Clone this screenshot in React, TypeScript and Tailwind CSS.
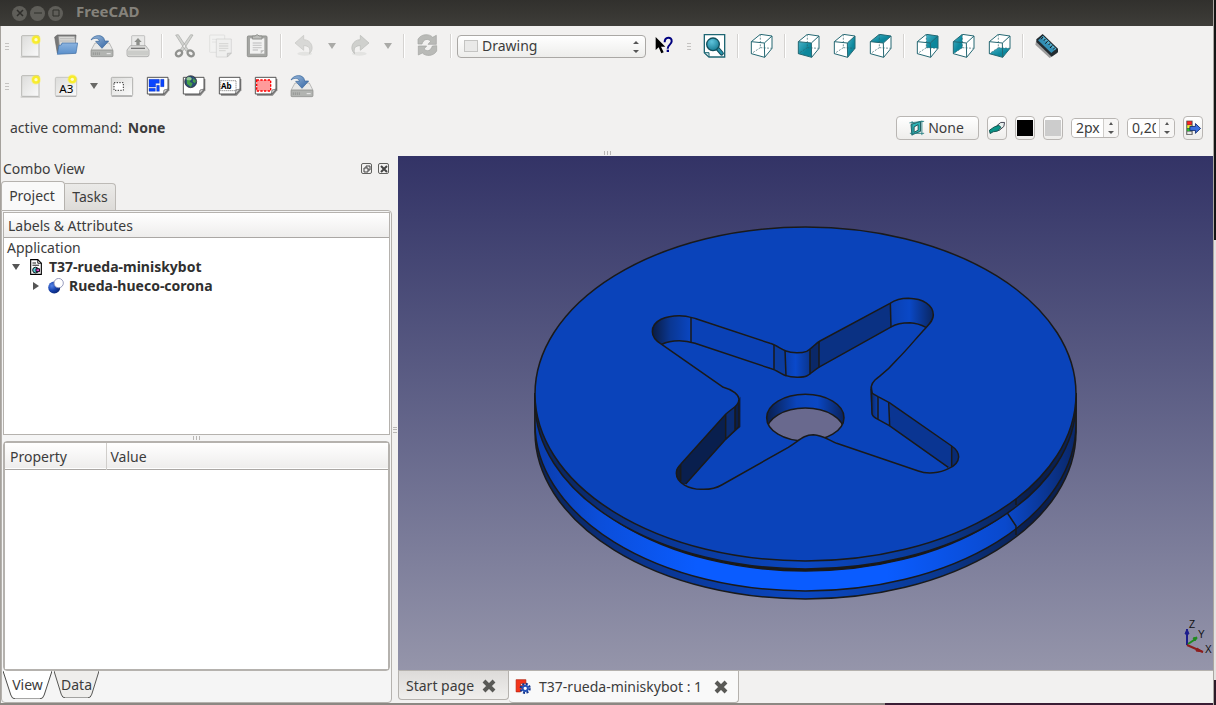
import * as React from 'react';

type IconProps = { children: React.ReactNode; className?: string };

// Toolbar artwork is drawn on a 72 unit grid and shown at 24px.
function Icon({ children, className = 'size-6' }: IconProps) {
  return (
    <svg viewBox="0 0 72 72" className={`${className} shrink-0`} fill="none" aria-hidden="true">
      {children}
    </svg>
  );
}

function Glow({ x, y }: { x: number; y: number }) {
  return (
    <g>
      <circle cx={x} cy={y} r="15" fill="#fff23a" opacity=".35" />
      <circle cx={x} cy={y} r="12" fill="#f8ec20" opacity=".9" />
      <circle cx={x} cy={y} r="5" fill="#fffdc8" />
    </g>
  );
}

function NewIcon() {
  return (
    <Icon>
      <path d="M8 69h58" stroke="#b9b9b6" strokeWidth="3" />
      <rect x="11" y="5" width="52" height="62" rx="2" fill="url(#paper)" stroke="#adadaa" strokeWidth="2.5" />
      <Glow x={54} y={17} />
    </Icon>
  );
}

function OpenIcon() {
  return (
    <Icon>
      <path d="M2 9 10 3h56l-4 54H10z" fill="#777" stroke="#666" strokeWidth="2" />
      <path d="M14 7h48l4 30H16z" fill="#d8d8d6" stroke="#999" strokeWidth="2" />
      <path d="M18 14h44M18 21h44" stroke="#aaa" strokeWidth="2" />
      <path d="M24 27h47l-5 31-56 3 5-27 7-1z" fill="url(#folder)" stroke="#3c6ea8" strokeWidth="2" />
    </Icon>
  );
}

function SaveIcon() {
  return (
    <Icon>
      <path d="M15 27h43l11 22H3z" fill="#e9e9e8" stroke="#a0a09e" strokeWidth="2" />
      <rect x="3" y="48" width="66" height="20" rx="3" fill="#b2b4b1" stroke="#888a86" strokeWidth="2" />
      <path d="M10 55v8M16 55v8M22 55v8M28 55v8" stroke="#888a86" strokeWidth="2" />
      <path d="M50 59h12" stroke="#eee" strokeWidth="3" />
      <path d="M3 18C10 2 42-2 44 21h12L36 43 17 22h11C27 12 14 10 3 18z" fill="url(#arrowBlue)" stroke="#346299" strokeWidth="2" />
    </Icon>
  );
}

function PrintIcon() {
  return (
    <Icon>
      <rect x="17" y="5" width="39" height="34" rx="2" fill="#e9e9e8" stroke="#aaa" strokeWidth="2" />
      <path d="m36 12 11 12h-6v10H31V24h-6z" fill="#8c8e8a" />
      <path d="M13 35h46l10 13v14q0 6-6 6H9q-6 0-6-6V48z" fill="#dededc" stroke="#999" strokeWidth="2" />
      <path d="M5 50h62v14H5z" fill="#cbccc9" />
      <path d="M15 43h42" stroke="#777" strokeWidth="4" />
    </Icon>
  );
}

function CutIcon() {
  return (
    <Icon>
      <path d="m8 3 8-1 30 46-7 4zM60 3l-7-1-32 46 8 4z" fill="#d2d3d0" stroke="#a6a7a4" strokeWidth="2" />
      <ellipse cx="18" cy="58" rx="10" ry="8" stroke="#91928f" strokeWidth="7" transform="rotate(-35 18 58)" />
      <ellipse cx="53" cy="58" rx="10" ry="8" stroke="#91928f" strokeWidth="7" transform="rotate(35 53 58)" />
    </Icon>
  );
}

function CopyIcon() {
  return (
    <Icon>
      <rect x="2" y="3" width="45" height="52" rx="2" fill="#f2f2f1" stroke="#dadad8" strokeWidth="2" />
      <path d="M9 16h22M9 24h18" stroke="#ddd" strokeWidth="2" />
      <path d="M22 15h45v42L55 69H22z" fill="#efefee" stroke="#cfcfcd" strokeWidth="2" />
      <path d="M30 29h28M30 36h28M30 43h28M30 50h20" stroke="#d9d9d7" strokeWidth="4" />
      <path d="m67 57-12 12V58z" fill="#d9d9d7" stroke="#bbb" strokeWidth="2" />
    </Icon>
  );
}

function PasteIcon() {
  return (
    <Icon>
      <rect x="7" y="6" width="59" height="62" rx="3" fill="#a5a6a3" stroke="#91928f" strokeWidth="3" />
      <path d="M15 13h43v46H15z" fill="#f1f1f0" />
      <path d="M23 27h27M23 34h27M23 41h27M23 48h16" stroke="#ccc" strokeWidth="4" />
      <path d="M22 6h8q6-8 13 0h8v9H22z" fill="#bdbebb" stroke="#8e908c" strokeWidth="3" />
      <path d="m58 48-11 11V49z" fill="#bbb" />
    </Icon>
  );
}

function UndoIcon({ flip = false }: { flip?: boolean }) {
  return (
    <Icon>
      <g transform={flip ? 'matrix(-1 0 0 1 72 0)' : undefined}>
        <ellipse cx="38" cy="59" rx="22" ry="6" fill="#e3e3e1" />
        <path d="M9 27 35 4v13c24 0 34 28 17 42 4-16-1-24-17-24v14z" fill={flip ? '#cfd0cd' : '#d8d8d6'} stroke={flip ? '#b8b9b6' : '#c5c6c3'} strokeWidth="2" />
      </g>
    </Icon>
  );
}

function RefreshIcon() {
  return (
    <Icon>
      <g fill="#b9bab7" stroke="#a2a3a0" strokeWidth="2">
        <path d="M9 30V16C18-1 43-2 53 10l11-6v27H39l8-9c-8-9-21-8-26 8z" />
        <path d="M65 35v16C56 67 32 68 22 57l-12 6V36h25l-8 9c8 8 20 7 25-9z" />
      </g>
    </Icon>
  );
}

function WhatsThisIcon() {
  return (
    <Icon>
      <path d="M11 9v39l9-8 8 18 7-3-8-17h13z" fill="#000" />
      <path d="M38 25c0-18 22-18 21-3 0 10-12 10-12 22" stroke="#00007f" strokeWidth="6" />
      <path d="M44 47h7v7h-7z" fill="#00007f" />
    </Icon>
  );
}

function FitAllIcon() {
  return (
    <Icon>
      <path d="M7 2h61v67H21L7 56z" fill="#fff" stroke="#1e6673" strokeWidth="4" />
      <path d="M7 56h14v13z" fill="#c9dfe2" stroke="#1e6673" strokeWidth="3" />
      <path d="m46 43 13 15" stroke="#134e5c" strokeWidth="13" strokeLinecap="round" />
      <path d="m46 43 13 15" stroke="#2992aa" strokeWidth="7" strokeLinecap="round" />
      <circle cx="33" cy="31" r="19" fill="url(#lens)" stroke="#12505e" strokeWidth="4" />
    </Icon>
  );
}

const FACES = {
  none: '',
  front: 'M7 23 46 27 47 70 7 59z',
  right: 'M46 27 69 6V43L47 70z',
  top: 'M7 23 34 1 69 6 46 27z',
  rear: 'M34 1 69 6V43L34 41z',
  left: 'M7 23 34 1V41L7 59z',
  bottom: 'M7 59 34 41 69 43 47 70z',
};

type Face = keyof typeof FACES;

function CubeIcon({ face }: { face: Face }) {
  return (
    <Icon>
      <path d="M7 23 34 1 69 6V43L47 70 7 59z" fill="#fff" />
      {FACES[face] && <path d={FACES[face]} fill="url(#teal)" />}
      <path d="M34 1v40L7 59M34 41l35 2" stroke="#2c5f68" strokeWidth="2" strokeDasharray="6 4" />
      <path d="M7 23 34 1 69 6V43L47 70 7 59zM7 23l39 4M46 27 69 6M46 27l1 43" stroke="#256873" strokeWidth="3" strokeLinejoin="round" />
    </Icon>
  );
}

function MeasureIcon() {
  return (
    <Icon>
      <path d="m6 22-2 10 43 40 22-14V48z" fill="#777" opacity=".7" />
      <path d="m26 0 46 44v11L53 68 7 24v-8z" fill="#222b30" />
      <path d="M27 6 67 44 52 57 12 19z" fill="#328fb5" />
      <path d="m27 6-5 4 40 38 5-4z" fill="#54abc9" />
      <path d="m27 9-6 7m13-1-4 5m11 1-7 8m14-1-4 5m11 1-7 8m14-1-4 5" stroke="#111" strokeWidth="3" />
    </Icon>
  );
}

function A3Icon() {
  return (
    <Icon>
      <rect x="4" y="10" width="64" height="56" rx="4" fill="url(#paper)" stroke="#b5b5b2" strokeWidth="2" />
      <path d="M5 67h62" stroke="#aaa" strokeWidth="3" />
      <Glow x={55} y={16} />
      <text x="37" y="56" textAnchor="middle" fontSize="35" fill="#000" className="font-['Noto_Sans',sans-serif]">A3</text>
    </Icon>
  );
}

function ViewFrameIcon() {
  return (
    <Icon>
      <rect x="4" y="10" width="64" height="55" rx="3" fill="url(#paper)" stroke="#b0b0ae" strokeWidth="3" />
      <path d="M5 67h62" stroke="#aaa" strokeWidth="3" />
      <rect x="12" y="26" width="28" height="23" fill="#fff" stroke="#333" strokeWidth="3" strokeDasharray="4 4" />
    </Icon>
  );
}

function Sheet({ children }: { children: React.ReactNode }) {
  return (
    <Icon>
      <path d="M9 15h61v34L56 65H9z" fill="#555" opacity=".7" />
      <path d="M4 10h62v36L52 60H4z" fill="#fff" stroke="#555" strokeWidth="3" />
      {children}
      <path d="m67 45-15 16 2-13z" fill="#ddd" stroke="#555" strokeWidth="2" />
    </Icon>
  );
}

function OrthoIcon() {
  return (
    <Sheet>
      <path d="M9 16h31v12H29v11H9zM44 16h10v22H44zM9 43h19v9H9zM32 34h8v18h-8z" fill="#0a45ff" stroke="#0a2a9a" strokeWidth="1" />
    </Sheet>
  );
}

function BrowserIcon() {
  return (
    <Sheet>
      <circle cx="26" cy="23" r="18" fill="#2a4d77" stroke="#222" strokeWidth="2" />
      <path d="M14 13q9-8 16 1l-7 9 9 5-5 11-12-9zM34 13l8 7-3 8-7-5z" fill="#47a04a" />
      <ellipse cx="21" cy="14" rx="8" ry="5" fill="#cbe2cd" opacity=".6" />
    </Sheet>
  );
}

function AnnotationIcon() {
  return (
    <Sheet>
      <rect x="8" y="20" width="46" height="30" stroke="#222" strokeWidth="2" strokeDasharray="3 3" />
      <text x="25" y="44" textAnchor="middle" fontSize="24" fontWeight="700" fill="#000" className="font-['Noto_Sans',sans-serif]">Ab</text>
    </Sheet>
  );
}

function ClipIcon() {
  return (
    <Sheet>
      <rect x="8" y="18" width="42" height="33" fill="#ff9b9b" stroke="#f00" strokeWidth="4" strokeDasharray="7 4" />
    </Sheet>
  );
}

function PlaneIcon() {
  return (
    <Icon className="size-4">
      <path d="M9 20 52 6v45L13 67zM23 31v24l18-9V21z" fill="#2fb6b8" fillRule="evenodd" stroke="#144b4e" strokeWidth="4" />
      <path d="M2 13 68 6M4 60h64M14 5v65M58 2v66" stroke="#257e83" strokeWidth="4" />
    </Icon>
  );
}

function ConstructionIcon() {
  return (
    <Icon className="size-4">
      <path d="m36 25 17-14h17l-3 18-21 18-15-3z" fill="#e8f0ee" stroke="#334" strokeWidth="4" />
      <path d="m2 46 22-15 20-7 10 9-15 17-20 3-14 8z" fill="#0b9488" stroke="#084b46" strokeWidth="4" />
    </Icon>
  );
}

function ApplyIcon() {
  return (
    <Icon className="size-4">
      <path d="M6 3h28v64H6z" fill="#444" />
      <path d="M10 6h20v15H10z" fill="#f22" />
      <path d="M10 23h20v13H10z" fill="#f9ee32" />
      <path d="M10 38h20v12H10z" fill="#2bc52b" />
      <path d="M10 52h20v12H10z" fill="#e8e8e8" />
      <path d="M22 29h25V16l23 22-23 22V47H22z" fill="#3d70df" stroke="#122c70" strokeWidth="4" />
    </Icon>
  );
}

function DocumentIcon() {
  return (
    <Icon className="size-4">
      <path d="M12 3h32l16 16v50H12z" fill="#fff" stroke="#000" strokeWidth="5" />
      <path d="M44 3v16h16M20 18h16M20 28h30" stroke="#000" strokeWidth="4" />
      <circle cx="34" cy="50" r="13" fill="#5ac9d6" stroke="#000" strokeWidth="4" />
      <path d="M36 44h16v13H36z" fill="#e04ad0" stroke="#000" strokeWidth="4" />
    </Icon>
  );
}

function BooleanIcon() {
  return (
    <Icon className="size-4">
      <circle cx="28" cy="43" r="27" fill="url(#ball)" />
      <circle cx="48" cy="23" r="21" fill="#fff" stroke="#8a8fb5" strokeWidth="4" />
    </Icon>
  );
}

function FreeCadIcon() {
  return (
    <Icon className="size-4">
      <path d="M5 3h44v17H25v9h19v15H25v14H5z" fill="#f4351b" stroke="#b21d0a" strokeWidth="3" />
      <circle cx="46" cy="42" r="20" stroke="#12348c" strokeWidth="10" strokeDasharray="9 6.7" />
      <circle cx="46" cy="42" r="12" fill="#fff" stroke="#2552b8" strokeWidth="9" />
    </Icon>
  );
}

function Cross() {
  return (
    <svg viewBox="0 0 14 14" className="size-3.5" aria-hidden="true">
      <path d="m2 2 10 10m0-10L2 12" stroke="#595956" strokeWidth="4" />
    </svg>
  );
}

function Caret() {
  return (
    <svg viewBox="0 0 8 6" className="h-1.5 w-2" aria-hidden="true">
      <path d="M0 0h8L4 6z" fill="currentColor" />
    </svg>
  );
}

function SharedPaints() {
  return (
    <svg className="absolute size-0" aria-hidden="true">
      <defs>
        <linearGradient id="paper" x1="0" y1="0" x2="1" y2="1">
          <stop stopColor="#dcdcda" />
          <stop offset="1" stopColor="#fafafa" />
        </linearGradient>
        <linearGradient id="folder" x1="0" y1="0" x2="0" y2="1">
          <stop stopColor="#8cb4e0" />
          <stop offset="1" stopColor="#5a8fca" />
        </linearGradient>
        <linearGradient id="arrowBlue" x1="0" y1="0" x2="1" y2="1">
          <stop stopColor="#9cbbdc" />
          <stop offset="1" stopColor="#3465a4" />
        </linearGradient>
        <radialGradient id="lens" cx=".4" cy=".3" r=".8">
          <stop stopColor="#5fc4dc" />
          <stop offset="1" stopColor="#10748c" />
        </radialGradient>
        <linearGradient id="teal" x1="0" y1="0" x2="1" y2="1">
          <stop stopColor="#48b1c6" />
          <stop offset=".6" stopColor="#0c879c" />
          <stop offset="1" stopColor="#0c879c" />
        </linearGradient>
        <radialGradient id="ball" cx=".3" cy=".35" r=".8">
          <stop stopColor="#5684e8" />
          <stop offset=".5" stopColor="#1742ad" />
          <stop offset="1" stopColor="#071e66" />
        </radialGradient>
      </defs>
    </svg>
  );
}

function ToolButton({ label, children, disabled }: { label: string; children: React.ReactNode; disabled?: boolean }) {
  return (
    <button type="button" aria-label={label} disabled={disabled} className="flex h-9 w-9 shrink-0 items-center justify-center">
      {children}
    </button>
  );
}

function MenuArrow({ label, muted }: { label: string; muted?: boolean }) {
  return (
    <button type="button" aria-label={label} className={`flex h-9 w-5 shrink-0 items-center justify-center ${muted ? 'text-[#aaaaa7]' : 'text-[#696966]'}`}>
      <Caret />
    </button>
  );
}

function Separator() {
  return (
    <div className="flex w-[11px] shrink-0 justify-center">
      <div className="h-6 w-0.5 border-r border-white bg-[#d5d3d1]" />
    </div>
  );
}

function Grip({ className = 'w-[11px]' }: { className?: string }) {
  return (
    <div className={`flex shrink-0 flex-col items-center gap-0.5 ${className}`}>
      <div className="h-px w-1 bg-[#c5c3c1]" />
      <div className="h-px w-1 bg-[#c5c3c1]" />
      <div className="h-px w-1 bg-[#c5c3c1]" />
    </div>
  );
}

function FlatGrip() {
  return (
    <div className="flex gap-0.5">
      <div className="h-1 w-px bg-[#b9b7b5]" />
      <div className="h-1 w-px bg-[#b9b7b5]" />
      <div className="h-1 w-px bg-[#b9b7b5]" />
    </div>
  );
}

function TitleBar() {
  const dot = 'flex size-[15px] items-center justify-center rounded-full bg-[#5f5e59]';
  return (
    <header className="flex h-[26px] shrink-0 items-center bg-linear-to-b from-[#31302d] to-[#3e3d39] pl-3">
      <div className="flex gap-[3px]">
        <button type="button" aria-label="Close" className={dot}>
          <svg viewBox="0 0 8 8" className="size-2"><path d="m1 1 6 6m0-6L1 7" stroke="#2f2e2b" strokeWidth="1.5" /></svg>
        </button>
        <button type="button" aria-label="Minimize" className={dot}>
          <svg viewBox="0 0 8 8" className="size-2"><path d="M0 4h8" stroke="#2f2e2b" strokeWidth="1" /></svg>
        </button>
        <button type="button" aria-label="Maximize" className={dot}>
          <svg viewBox="0 0 8 8" className="size-2"><path d="M1 1h6v6H1z" fill="none" stroke="#2f2e2b" strokeWidth="1" /></svg>
        </button>
      </div>
      <h1 className="pb-0.5 pl-[13px] text-[15px] font-bold text-[#85827b]">FreeCAD</h1>
    </header>
  );
}

function MainToolbar() {
  return (
    <div role="toolbar" aria-label="Standard" className="flex h-10 shrink-0 items-center">
      <Grip />
      <ToolButton label="New"><NewIcon /></ToolButton>
      <ToolButton label="Open"><OpenIcon /></ToolButton>
      <ToolButton label="Save"><SaveIcon /></ToolButton>
      <ToolButton label="Print"><PrintIcon /></ToolButton>
      <Separator />
      <ToolButton label="Cut" disabled><CutIcon /></ToolButton>
      <ToolButton label="Copy" disabled><CopyIcon /></ToolButton>
      <ToolButton label="Paste" disabled><PasteIcon /></ToolButton>
      <Separator />
      <ToolButton label="Undo" disabled><UndoIcon /></ToolButton>
      <MenuArrow label="Undo history" muted />
      <ToolButton label="Redo" disabled><UndoIcon flip /></ToolButton>
      <MenuArrow label="Redo history" muted />
      <Separator />
      <ToolButton label="Refresh" disabled><RefreshIcon /></ToolButton>
      <Separator />
      <div className="ml-px flex h-[23px] w-[189px] shrink-0 items-center rounded border border-[#aaa8a5] bg-linear-to-b from-white to-[#ededeb] px-1.5">
        <div className="h-3 w-3.5 border border-[#c4c4c2] bg-[#e9e9e8]" />
        <select aria-label="Workbench" defaultValue="Drawing" className="h-full min-w-0 flex-1 appearance-none pl-1 leading-5 outline-none">
          <option>Drawing</option>
        </select>
        <svg viewBox="0 0 6 14" className="h-3.5 w-1.5" aria-hidden="true">
          <path d="M0 5h6L3 2zM0 11h6l-3 3z" fill="#555" />
        </svg>
      </div>
      <ToolButton label="What's This?"><WhatsThisIcon /></ToolButton>
      <Grip className="w-3.5" />
      <ToolButton label="Fit all"><FitAllIcon /></ToolButton>
      <Separator />
      <ToolButton label="Axonometric"><CubeIcon face="none" /></ToolButton>
      <Separator />
      <ToolButton label="Front"><CubeIcon face="front" /></ToolButton>
      <ToolButton label="Right"><CubeIcon face="right" /></ToolButton>
      <ToolButton label="Top"><CubeIcon face="top" /></ToolButton>
      <Separator />
      <ToolButton label="Rear"><CubeIcon face="rear" /></ToolButton>
      <ToolButton label="Left"><CubeIcon face="left" /></ToolButton>
      <ToolButton label="Bottom"><CubeIcon face="bottom" /></ToolButton>
      <Separator />
      <ToolButton label="Measure distance"><MeasureIcon /></ToolButton>
    </div>
  );
}

function DrawingToolbar() {
  return (
    <div role="toolbar" aria-label="Drawing" className="flex h-10 shrink-0 items-center">
      <Grip />
      <ToolButton label="New drawing"><NewIcon /></ToolButton>
      <ToolButton label="Insert A3 page"><A3Icon /></ToolButton>
      <MenuArrow label="Page sizes" />
      <ToolButton label="Insert view"><ViewFrameIcon /></ToolButton>
      <ToolButton label="Insert orthographic views"><OrthoIcon /></ToolButton>
      <ToolButton label="Open browser view"><BrowserIcon /></ToolButton>
      <ToolButton label="Annotation"><AnnotationIcon /></ToolButton>
      <ToolButton label="Clip group"><ClipIcon /></ToolButton>
      <ToolButton label="Export page"><SaveIcon /></ToolButton>
    </div>
  );
}

const raised = 'flex h-6 items-center justify-center rounded border border-[#b9b6b3] bg-linear-to-b from-white to-[#eeedeb]';

function Spin({ label, value }: { label: string; value: string }) {
  return (
    <div className="flex h-5 w-12 rounded border border-[#b9b6b3] bg-white">
      <input aria-label={label} defaultValue={value} className="w-[31px] min-w-0 rounded-l bg-white pr-[3px] pl-1 outline-none" />
      <div className="flex flex-1 flex-col items-center justify-between rounded-r border-l border-[#cfcdca] bg-[#f7f6f5] py-[3px] text-[#555]">
        <button type="button" aria-label={`${label} up`}>
          <svg viewBox="0 0 6 3" className="block h-[3px] w-1.5"><path d="M1 3h4L3 0z" fill="currentColor" /></svg>
        </button>
        <button type="button" aria-label={`${label} down`}>
          <svg viewBox="0 0 6 3" className="block h-[3px] w-1.5"><path d="M0 0h6L3 3z" fill="currentColor" /></svg>
        </button>
      </div>
    </div>
  );
}

function CommandBar() {
  return (
    <div className="flex h-11 shrink-0 items-center justify-between pr-2.5 pl-[9px]">
      <p>
        active command: <b className="pl-0.5">None</b>
      </p>
      <div className="flex items-center gap-2">
        <button type="button" className={`${raised} w-[83px] gap-[3px] pr-0.5`}>
          <PlaneIcon /> None
        </button>
        <button type="button" aria-label="Construction mode" className={`${raised} w-5`}><ConstructionIcon /></button>
        <button type="button" aria-label="Line color" className={`${raised} w-5`}><span className="size-4 shrink-0 bg-black" /></button>
        <button type="button" aria-label="Face color" className={`${raised} w-5`}><span className="size-4 shrink-0 bg-[#cccccc]" /></button>
        <Spin label="Line width" value="2px" />
        <Spin label="Text size" value="0,20" />
        <button type="button" aria-label="Apply to selected" className={`${raised} w-5`}><ApplyIcon /></button>
      </div>
    </div>
  );
}

function SheetTab({ label, active }: { label: string; active?: boolean }) {
  return (
    <button type="button" role="tab" aria-selected={!!active} className={`relative ${active ? 'h-7 w-[49px]' : 'h-[27px] w-[45px]'}`}>
      <svg viewBox="0 0 50 28" preserveAspectRatio="none" className="absolute inset-0 size-full" aria-hidden="true">
        <path d="M0 0 8 24q1 4 5 4h24q4 0 5-4l8-24" fill={active ? '#fff' : '#efeeec'} stroke="#4a4a48" />
      </svg>
      <span className="relative">{label}</span>
    </button>
  );
}

function ComboView() {
  const dockButton = 'flex size-[11px] items-center justify-center rounded-xs border border-[#62625f]';
  return (
    <aside className="flex w-[391px] shrink-0 flex-col">
      <div className="flex h-[25px] shrink-0 items-center justify-between pr-[3px] pl-0.5">
        <h2>Combo View</h2>
        <div className="flex gap-1.5">
          <button type="button" aria-label="Float" className={dockButton}>
            <svg viewBox="0 0 8 8" className="size-2"><path d="M3 3V1h4v4H5M1 3h4v4H1z" fill="none" stroke="#444" /></svg>
          </button>
          <button type="button" aria-label="Close panel" className={dockButton}>
            <svg viewBox="0 0 8 8" className="size-2"><path d="m1 1 6 6m0-6L1 7" stroke="#444" strokeWidth="2" /></svg>
          </button>
        </div>
      </div>
      <div role="tablist" className="flex h-[29px] shrink-0 items-end">
        <button type="button" role="tab" aria-selected="true" className="h-[29px] w-16 rounded-t border border-b-0 border-[#b5b2ae] bg-[#f9f9f9] pr-0.5">Project</button>
        <button type="button" role="tab" aria-selected="false" className="h-[27px] w-[51px] rounded-tr border border-b-0 border-l-0 border-[#bdbab6] bg-linear-to-b from-[#ebeae8] to-[#dddbd8]">Tasks</button>
      </div>
      <div className="flex min-h-0 flex-1 flex-col rounded-tr rounded-b border border-[#b5b2ae] bg-[#f5f5f5] p-px">
        <section className="flex min-h-0 flex-[223] flex-col border border-[#b5b2ae] bg-white">
          <h3 className="h-[25px] shrink-0 border-b border-[#aaa7a4] bg-linear-to-b from-white to-[#eeedec] pt-px pl-1 leading-6">Labels &amp; Attributes</h3>
          <ul className="leading-[19px]">
            <li className="pl-[3px]">Application</li>
            <li className="flex items-center pl-2 font-bold text-[#303030]">
              <span className="text-[#555]"><Caret /></span>
              <span className="flex items-center gap-[5px] pl-2"><DocumentIcon />T37-rueda-miniskybot</span>
            </li>
            <li className="flex items-center pl-7 font-bold text-[#303030]">
              <span className="-rotate-90 text-[#555]"><Caret /></span>
              <span className="flex items-center gap-[5px] pl-2"><BooleanIcon />Rueda-hueco-corona</span>
            </li>
          </ul>
        </section>
        <div className="flex h-1.5 shrink-0 items-center justify-center"><FlatGrip /></div>
        <section className="flex min-h-0 flex-[230] flex-col rounded border border-[#b5b2ae]">
          <div className="flex-1 border border-[#b5b2ae] bg-white">
            <table className="w-full table-fixed border-collapse text-left">
              <thead>
                <tr className="h-[26px] border-b border-[#aaa7a4] bg-linear-to-b from-white to-[#eeedec]">
                  <th className="w-[101px] border-r border-[#d0cecb] p-0 pt-0.5 pl-[5px] font-normal">Property</th>
                  <th className="p-0 pt-0.5 pl-1 font-normal">Value</th>
                </tr>
              </thead>
            </table>
          </div>
        </section>
        <div role="tablist" className="flex h-[30px] shrink-0 items-start gap-0.5">
          <SheetTab label="View" active />
          <SheetTab label="Data" />
        </div>
      </div>
    </aside>
  );
}

const POCKET =
  'M37 155C37 120 80 107 118 107c20 0 35 5 50 9l222 74c15 4 35 18 48 23 17 7 47 7 62 1 15-8 27-24 40-31L750 70c15-10 35-15 55-15 45 1 75 20 75 50 0 15-10 25-22 38-28 29-48 57-88 97-30 35-45 43-65 60-14 14-12 22-8 40l17 10 34 18 187 130c15 10 21 20 21 33-1 17-11 27-31 35-25 14-65 17-90 7l-245-83c-25-10-40-25-70-26-30 1-40 16-75 38L245 615c-25 15-45 13-61 13-35 0-75-18-75-48 0-15 6-20 13-27l135-150c18-18 40-25 40-46-1-12-17-27-47-35L65 193C48 183 37 170 37 155z';

// The pocket cut in the top face, in its own 3x coordinate space.
function Pocket() {
  return (
    <g transform="translate(640 280) scale(.33333)" fill="none" stroke="#1a1a1a" strokeWidth="4.5" strokeLinejoin="round">
      <clipPath id="pocketClip"><path d={POCKET} /></clipPath>
      <clipPath id="holeClip"><ellipse cx="496" cy="413" rx="116" ry="70" /></clipPath>
      <g clipPath="url(#pocketClip)">
        <g stroke="none">
          <path d="M30 100h123v87C120 178 90 182 65 196L30 180z" fill="url(#wallLeft)" />
          <path d="M153 105 402 190v78L153 187z" fill="#0a41b6" />
          <path d="M402 190l36 20v77l-36-19z" fill="#0b3c9f" />
          <path d="M438 205h72v78c-12 10-55 12-72 4z" fill="url(#wallMid)" />
          <path d="M510 200l27-20v82l-27 20z" fill="#0a2868" />
          <path d="M537 180 752 60v82L537 262z" fill="#0a3183" />
          <path d="M752 50h140v80l-34 14c-30-20-70-20-106-2z" fill="url(#wallRight)" />
          <path d="M100 540 257 395v82L137 612l-40 10z" fill="#091f4e" />
          <path d="M257 395l45-45v90l-45 38z" fill="#0a2b70" />
          <path d="M285 370h14v72l-14 8z" fill="#0a1e49" />
          <path d="M690 325l24 20v73q-20-5-20-20z" fill="url(#wallTurn)" />
          <path d="M714 345l34 20v72l-34-19z" fill="#0a41b6" />
          <path d="M748 360 935 490v73h-10L748 437z" fill="#0a3592" />
          <path d="M935 490h25v60l-25 15z" fill="#082a73" />
          <path d="M105 560h18v45h-18z" fill="#111c33" />
        </g>
        <g clipPath="url(#holeClip)">
          <path d="M370 330h250v170H370z" fill="url(#bore)" stroke="none" />
          <ellipse cx="496" cy="454" rx="116" ry="70" fill="#69698e" />
        </g>
        <ellipse cx="496" cy="413" rx="116" ry="70" />
        <path d="M65 193c15-8 35-11 53-11 22 0 32 3 47 8l225 75c20 5 35 18 48 22 17 6 52 6 62 1 12-6 25-20 40-28l215-120c15-10 35-12 55-12 20 1 35 7 48 14" />
        <path d="M153 112v75M402 190v78M435 210l3 77M510 208v75M537 184v78M751 68l2 74" />
        <path d="M137 612 257 478l40-38V357M257 403v75M285 380v70M122 553v50" />
        <path d="M694 320l2 80q0 10 18 18l34 19 177 125M714 347v71M746 365l3 72M935 495v65" />
      </g>
      <path d={POCKET} />
    </g>
  );
}

function AxisCross() {
  return (
    <g strokeWidth="2" fill="none">
      <path d="M1187 645v-16" stroke="#1d1d8c" />
      <path d="m1188 644 9-6" stroke="#1f8a1f" />
      <path d="m1187 645 16 7" stroke="#8c1d1d" />
      <path d="m1185 634 2-5 2 5z" fill="#1d1d8c" stroke="#1d1d8c" strokeWidth="1" />
      <path d="m1193 638 4-1-2 4z" fill="#1f8a1f" stroke="#1f8a1f" strokeWidth="1" />
      <path d="m1197 648 6 4-7-1z" fill="#8c1d1d" stroke="#8c1d1d" strokeWidth="1" />
      <g fill="#111" fontSize="10" className="font-['Liberation_Sans',sans-serif]">
        <text x="1189" y="628">Z</text>
        <text x="1198" y="638">Y</text>
        <text x="1205" y="653">X</text>
      </g>
    </g>
  );
}

function Viewport() {
  return (
    <div className="min-h-0 flex-1 bg-linear-to-b from-[#333366] to-[#9595aa]">
      <svg viewBox="398 156 815 514" className="size-full" role="img" aria-label="Wheel model">
        <defs>
          <linearGradient id="rim">
            <stop stopColor="#0a2357" />
            <stop offset=".2" stopColor="#0a348d" />
            <stop offset=".5" stopColor="#0a47c2" />
            <stop offset=".75" stopColor="#0a388f" />
            <stop offset=".92" stopColor="#0a1e4d" />
            <stop offset="1" stopColor="#0a2256" />
          </linearGradient>
          <linearGradient id="groove">
            <stop stopColor="#0a3cab" />
            <stop offset=".12" stopColor="#0b4eda" />
            <stop offset=".3" stopColor="#0a5cff" />
            <stop offset=".65" stopColor="#0a5cff" />
            <stop offset=".87" stopColor="#0a49cc" />
            <stop offset="1" stopColor="#0a2768" />
          </linearGradient>
          <linearGradient id="wallLeft"><stop stopColor="#0a1838" /><stop offset=".5" stopColor="#0a3793" /><stop offset="1" stopColor="#0a46c2" /></linearGradient>
          <linearGradient id="wallMid"><stop stopColor="#0a3fae" /><stop offset=".4" stopColor="#0a49cb" /><stop offset="1" stopColor="#0a358d" /></linearGradient>
          <linearGradient id="wallRight"><stop stopColor="#0a40b1" /><stop offset=".4" stopColor="#0a48c6" /><stop offset="1" stopColor="#0a2050" /></linearGradient>
          <linearGradient id="wallTurn"><stop stopColor="#0a2560" /><stop offset="1" stopColor="#0a40b0" /></linearGradient>
          <linearGradient id="bore"><stop stopColor="#0a1a40" /><stop offset=".4" stopColor="#0a44bb" /><stop offset=".65" stopColor="#0a47c4" /><stop offset="1" stopColor="#0a1f50" /></linearGradient>
        </defs>
        <g stroke="#1a1a1a" strokeWidth="1.5">
          <path d="M535 394v38a270.5 167 0 0 0 541 0v-38z" fill="url(#rim)" />
          <path d="M535 394v30a270.5 167 0 0 0 541 0v-30z" fill="url(#groove)" />
          <ellipse cx="805.5" cy="409" rx="262" ry="162" fill="#1a1a1a" />
          <path d="M1006 511l10 15v9" fill="none" />
          <path d="M535 394v8a270.5 167 0 0 0 541 0v-8z" fill="url(#rim)" />
          <path d="M1016 497v8" />
          <ellipse cx="805.5" cy="394" rx="270.5" ry="167" fill="#0a43ba" />
        </g>
        <Pocket />
        <AxisCross />
      </svg>
    </div>
  );
}

function DocumentTabs() {
  return (
    <div className="flex h-[33px] shrink-0 items-start border-t border-[#b5b2ae]">
      <div className="flex h-[29px] items-center gap-2 rounded-b border border-t-0 border-[#b5b2ae] bg-linear-to-b from-[#dddbd9] to-[#f0efed] pt-0.5 pr-3 pl-[7px]">
        <button type="button">Start page</button>
        <button type="button" aria-label="Close Start page"><Cross /></button>
      </div>
      <div className="flex h-8 items-center gap-3 rounded-b border border-t-0 border-l-0 border-[#b5b2ae] bg-[#f9f9f9] pr-2.5 pl-1.5">
        <button type="button" className="flex items-center gap-2"><FreeCadIcon />T37-rueda-miniskybot : 1</button>
        <button type="button" aria-label="Close T37-rueda-miniskybot"><Cross /></button>
      </div>
    </div>
  );
}

export default function App() {
  return (
    <div className="flex h-screen overflow-hidden bg-[#f2f1f0] font-['Noto_Sans',sans-serif] text-sm text-[#3c3c3c]">
      <SharedPaints />
      <div className="flex min-w-0 flex-1 flex-col">
        <TitleBar />
        <div className="flex min-h-0 flex-1 flex-col border-l border-[#a5a19c]">
          <MainToolbar />
          <DrawingToolbar />
          <CommandBar />
          <div className="flex h-1.5 shrink-0 items-center justify-center"><FlatGrip /></div>
          <main className="flex min-h-0 flex-1">
            <ComboView />
            <div className="flex w-1.5 shrink-0 flex-col justify-center"><div className="-rotate-90"><FlatGrip /></div></div>
            <div className="flex min-w-0 flex-1 flex-col">
              <Viewport />
              <DocumentTabs />
            </div>
          </main>
        </div>
        <div className="flex h-0.5 shrink-0">
          <div className="flex-[73] bg-[#8c8883]" />
          <div className="flex-[27] bg-[#3a1e35]" />
        </div>
      </div>
      <div className="flex w-[3px] shrink-0 flex-col border-l border-[#aaa6a1]">
        <div className="flex-[240] bg-[#151515]" />
        <div className="flex-[440] bg-[#e4e2e0]" />
        <div className="flex-[25] bg-[#2c1a28]" />
      </div>
    </div>
  );
}
